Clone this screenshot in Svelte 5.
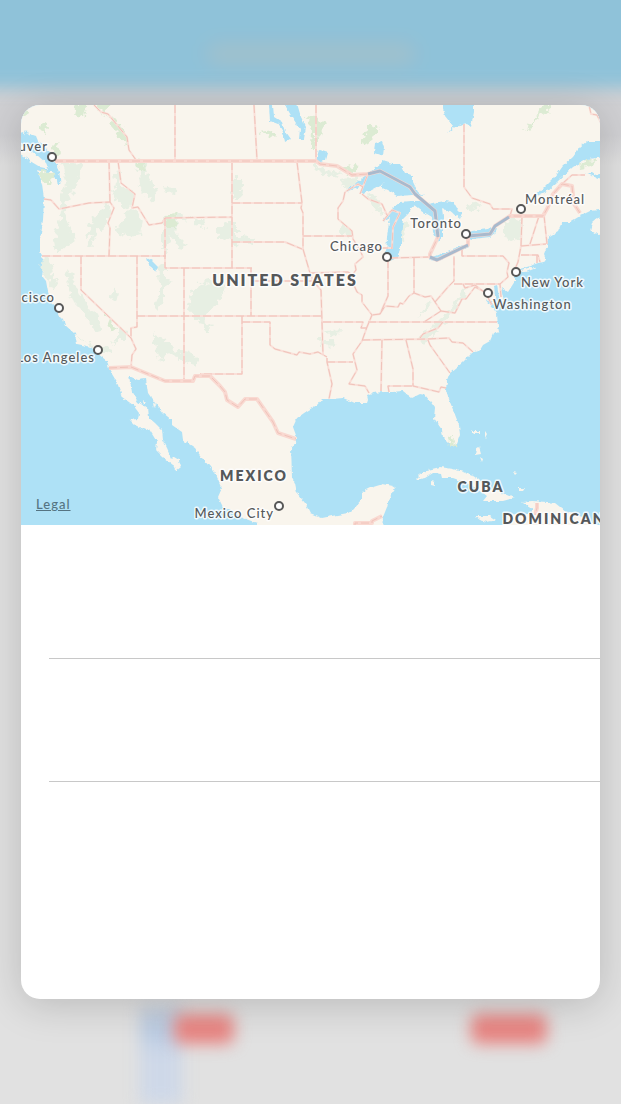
<script>
  const cities = [
    { name: 'Vancouver', x: 48, y: 151, anchor: 'end', cx: 52, cy: 157 },
    { name: 'San Francisco', x: 55, y: 302, anchor: 'end', cx: 59, cy: 308 },
    { name: 'Los Angeles', x: 95, y: 362, anchor: 'end', cx: 98, cy: 350 },
    { name: 'Chicago', x: 383, y: 251, anchor: 'end', cx: 387, cy: 257 },
    { name: 'Toronto', x: 462, y: 228, anchor: 'end', cx: 466, cy: 234 },
    { name: 'Montréal', x: 525, y: 204, anchor: 'start', cx: 521, cy: 209 },
    { name: 'New York', x: 521, y: 287, anchor: 'start', cx: 516, cy: 272 },
    { name: 'Washington', x: 493, y: 309, anchor: 'start', cx: 488, cy: 293 },
    { name: 'Mexico City', x: 274, y: 518, anchor: 'end', cx: 279, cy: 506 },
  ];

  const countries = [
    { name: 'UNITED STATES', x: 285, y: 286, large: true },
    { name: 'MEXICO', x: 254, y: 481 },
    { name: 'CUBA', x: 481, y: 492 },
    { name: 'DOMINICAN', x: 554, y: 524 },
  ];

  const mainland =
    'M15 100V128L26 137 30 134 36 136 38 141 44 145 50 154 54 162 57 166 58 174 56 180 53 172 47 172 37 169 39 174 42 184 44 198 43 221 40 239 40 250 44 264 42 276 46 281 48 292 53 304 59 308 58 314 63 319 65 325 75 334 77 344 92 347 98 354 107 361 109 369 115 379 118 385 122 397 133 405 139 413 138 419 130 420 135 425 145 430 149 429 157 442 156 450 163 457 173 465 176 471 181 467 179 460 174 457 172 459 167 448 163 440 162 430 155 423 148 417 147 408 138 402 132 392 129 376 138 380 146 379 148 393 155 403 163 413 172 420 172 425 182 432 183 440 195 448 202 458 210 467 217 477 222 488 218 497 223 507 233 512 243 518 257 523V530H382L383 517 387 507 389 498 396 488 393 486 383 484 370 488 362 492 362 500 353 510 348 513 337 515 322 518 310 513 305 503 297 493 295 483 292 477 291 447 296 443 297 438 293 427 297 418 307 411 317 405 322 399 332 399 343 398 355 403 367 403 368 400 367 395 373 393 383 392 393 392 403 391 412 398 420 394 425 395 430 401 435 408 434 418 442 430 443 437 452 446 457 443 460 435 459 425 454 412 450 402 446 390 447 381 450 373 462 363 472 353 480 350 483 345 490 341 493 334 499 332 498 326 497 314 493 308 486 299 495 305 495 296 494 286 497 285 499 297 504 302 501 287 508 292 515 281 515 274 516 270 527 267 538 263 547 261 544 254 547 246 548 237 558 231 562 222 570 222 580 216 590 211 608 209V100Z';

  const lakes = [
    'M345 192L357 182 370 172 380 164 383 161 392 164 400 164 405 173 413 176 413 182 418 192 424 196 413 195 397 196 387 190 380 187 385 183 370 191 360 194 363 186Z',
    'M383 221L392 209 400 202 410 201 420 201 411 208 410 212 403 219 401 237 401 247 397 257 390 260 386 254 387 237 390 217Z',
    'M410 202L420 201 427 204 445 201 453 202 457 209 462 214 460 219 450 211 442 209 443 217 443 237 438 241 433 232 432 217 422 211Z',
    'M428 257L435 256 445 252 463 245 469 245 467 248 456 252 446 257 437 261 431 260Z',
    'M463 236L472 231 488 229 497 227 496 232 490 237 472 239Z',
    'M269 105H273L274 117 282 122 285 132 290 139 285 142 283 132 278 124 270 121Z',
    'M282 100H296L301 117 306 127 304 139 299 139 300 129 292 117Z',
    'M316 160L319 150 328 153 326 160 318 163Z',
    'M375 143L382 141 384 147 383 156 374 153Z',
    'M441 100H474L474 112 471 127 467 124 455 127 448 133 453 126 445 116Z',
    'M147 258L152 261 158 267 156 271 150 268Z',
    'M608 141H587L580 147 573 157 563 166 555 177 543 189 525 202 547 191 557 182 573 167 587 159 608 157Z',
    'M585 173L592 173 595 175 608 172V179L597 178Z',
  ];

  const islands = [
    'M15 144L26 148 37 155 46 163 49 169 40 167 30 161 15 150Z',
    'M517 271L532 267 536 268 526 272Z',
    'M608 216L598 218 592 223 590 230 598 235 608 234Z',
    'M415 480L420 475 428 470 440 467 453 469 463 472 477 478 488 487 500 492 514 498 503 501 483 501 487 496 478 489 467 483 453 478 442 478 441 474 433 473 425 478Z',
    'M431 481L435 482 435 486 431 485Z',
    'M475 516L490 516 496 520 487 522 480 520Z',
    'M522 502L532 501 547 502 555 503 560 507 567 512 577 515 590 520 598 528 505 528 502 516 516 514 533 514 533 509 528 506Z',
    'M476 449L479 447 481 454 475 455Z',
    'M480 457L483 459 482 462Z',
    'M519 488L525 488 523 491 519 491Z',
    'M471 431L480 431 480 433 473 433Z',
    'M485 431L487 434 485 438Z',
    'M513 472L517 473 515 475Z',
    'M472 474L480 480 479 482 474 477Z',
    'M142 400L146 404 144 404Z',
    'M153 403L156 404 154 408Z',
  ];

  const forests = [
    'M60 161L83 163 82 172 77 180 73 190 68 202 64 212 70 225 75 240 64 248 56 254 54 240 58 224 62 209 59 196 66 183Z',
    'M94 218L106 203 112 208 107 224 96 232 91 250 86 246 93 236 86 237 90 225Z',
    'M114 173L121 171 120 184 135 193 132 205 125 209 117 202 110 190 118 188Z',
    'M133 161L145 163 149 178 155 187 157 200 148 198 141 187 140 173Z',
    'M124 212L133 208 143 220 140 235 128 237 118 233 116 226 125 220Z',
    'M165 187L175 188 176 193 168 194Z',
    'M162 216L178 215 190 218 203 219 205 228 198 226 192 219 178 220 176 235 187 246 181 249 170 236 166 255 162 251Z',
    'M43 257L51 262 53 276 57 287 51 288 47 277 41 268Z',
    'M66 268L72 274 77 288 84 298 89 311 98 315 102 330 95 331 84 313 74 303 68 287Z',
    'M165 263L165 281 174 280 164 286 164 300 157 310 153 306 160 296 160 283 158 266Z',
    'M114 288L118 294 116 303 111 300Z',
    'M200 283L212 281 224 288 218 305 209 310 204 322 211 326 206 332 197 320 187 309 190 298Z',
    'M152 333L165 338 175 350 190 352 199 361 195 365 181 361 168 351 161 362 155 348Z',
    'M118 328L129 329 125 338 119 343 111 344 118 337Z',
    'M75 333L84 343 113 350 111 354 92 348Z',
    'M233 178L243 178 240 199 232 199Z',
    'M216 230L227 222 237 222 237 236 256 239 249 244 234 243 230 240 218 239Z',
    'M325 331L339 329 338 335 330 336Z',
    'M319 339L335 339 334 346 320 345Z',
    'M417 339L428 331 441 318 452 307 460 292 467 286 465 297 452 313 438 329 425 343Z',
    'M432 299L427 309 418 319 426 305Z',
    'M504 223L513 217 522 221 521 237 510 242 504 234Z',
    'M466 203L480 201 478 211 471 212Z',
    'M341 180L360 176 355 186 343 187Z',
    'M314 163L325 169 340 173 338 177 322 173 313 168Z',
    'M373 194L379 202 382 214 375 210 367 196Z',
    'M343 223L352 231 351 236 341 234Z',
    'M400 219L408 224 402 239 398 233Z',
  ];

  const parks = [
    'M78 100H87L84 115 78 119 75 113Z',
    'M41 122L48 127 47 133 39 130Z',
    'M21 105H28L26 116 22 115Z',
    'M94 100H112L109 109 102 114 115 119 127 135 129 146 119 139 111 121 102 113Z',
    'M52 146L57 141 60 154 54 157Z',
    'M40 172L55 173 52 183 43 183Z',
    'M134 160L142 161 145 169 139 170Z',
    'M166 215L176 214V227H165Z',
    'M105 313L113 321 116 331 110 330Z',
    'M306 116L315 117 325 124 322 135 316 136 316 149 311 147 312 130Z',
    'M259 132L272 130 275 138 265 135Z',
    'M361 147L367 129 376 123 379 133 373 138 366 144Z',
    'M345 168L356 164 357 172 348 174Z',
    'M522 132L534 123 537 113 543 105 553 105 548 112 539 115 535 125Z',
    'M579 164L590 159 596 160 591 166 580 168Z',
    'M446 436L451 435 455 441 454 447 448 442Z',
  ];

  const stateLines =
    'M94 105L101 112 108 114 127 137 129 150 136 160 M175 105V160 M254 105L257 160 M316 105V160 M109 161L110 202 M44 199L51 200 59 209 89 203 110 202 114 208 108 223 110 228 109 256 M118 161L121 183 135 194 132 208 138 207 149 225 162 223 165 218 232 217 M165 218V268H252 M232 162V268 M232 203H302 M232 242H285L302 249 M297 162L302 203 301 208 303 213V249L310 273 313 281 321 290 323 355 M303 236H352 M345 192L343 201 338 208V219L352 231 353 239 360 250 363 257 355 264 356 270 353 274 353 283 357 292 362 295 362 302 372 315 367 327 362 341 353 354 357 370 349 384 365 386 369 393 M360 194L368 174 M363 187L358 184 345 192 M362 194L368 199 382 204 387 215 M383 221L392 210 400 213 393 227 392 249 M358 248H392 M388 260V296L380 314 372 315 M390 258L430 257 M380 314L385 306 398 307 400 303 403 304 409 296 414 293 425 297 431 296 435 302 441 311 M414 258V293 M435 302L448 287 454 281V256 M454 284H500 M462 250V256H503L509 263 507 272 508 277 500 284 501 297 M522 216L521 246 518 262 515 269 M539 216L530 244 M544 215L547 244 M521 246L546 244 M521 255H538L540 262 M537 255L537 263 M441 311L424 322 M368 322H497 M323 322H363L361 328H367 M362 340L428 339 449 338 452 342 463 343 473 352 M428 340L430 345 450 373 M420 338L423 334 438 328 443 322 M441 311L455 313 462 299H466L475 287 485 292 492 305 M463 284L465 288 475 285 484 292 M382 340L381 391 M406 340L413 369V386L439 392 441 387 446 388 M389 392L388 386H413 M327 362H353 M327 358V362L332 384 329 399 M242 316V374H200 M242 322H270V345L275 349 297 355 299 352 310 354 318 352 327 357 M137 316H322 M252 281H315 M251 268V316 M310 273L348 272 353 275 M137 256V327L131 328V338 M184 268V381 M42 256H166 M81 256V290L131 338 136 349 132 355 131 367 M464 124V187L472 198 490 204 493 209H512L510 216 M562 184L572 175H585 M589 105L591 114 597 115 601 123';

  const nationLines =
    'M55 161H316L320 164 337 166 352 175 368 174 380 171 410 187 415 194 435 211 438 237 430 254 430 257 437 260 468 245 468 236 490 234 495 226 510 216H543L548 207 553 194 562 184 572 186 574 204 580 213 M109 368L131 367 165 381H193L195 376H210L220 386 225 392 227 400 238 407 245 399H257L273 422 278 433 296 439 M355 528V523H372V521L382 516 M537 503V508L535 515';

  const boundaryWaters =
    'M368 174L380 171 410 187 415 194 435 211 438 237 M430 257L437 260 468 245 M468 236L490 234 495 226 509 217';
</script>

<div class="screen">
  <div class="backdrop" aria-hidden="true">
    <div class="bar"><span class="heading"></span></div>
    <div class="chips">
      <span class="link"></span>
      <span class="chip"></span>
      <span class="chip wide"></span>
    </div>
  </div>

  <main class="card">
    <div class="map">
      <svg viewBox="21 105 579 420" role="img" aria-label="Map of the United States">
        <defs>
          <filter id="coast" x="-5%" y="-5%" width="110%" height="110%">
            <feTurbulence type="fractalNoise" baseFrequency="0.22" numOctaves="2" seed="4" />
            <feDisplacementMap in="SourceGraphic" scale="4" xChannelSelector="R" yChannelSelector="G" />
          </filter>
          <filter id="woods" x="-5%" y="-5%" width="110%" height="110%">
            <feTurbulence type="fractalNoise" baseFrequency="0.18" numOctaves="2" seed="9" />
            <feDisplacementMap in="SourceGraphic" scale="11" xChannelSelector="R" yChannelSelector="G" />
          </filter>
        </defs>
        <rect class="water" x="21" y="105" width="579" height="420" />
        <g filter="url(#coast)">
          <path class="land" d={mainland} />
        </g>
        <g filter="url(#woods)">
          {#each forests as d}<path class="forest" {d} />{/each}
          {#each parks as d}<path class="park" {d} />{/each}
        </g>
        <g filter="url(#coast)">
          {#each lakes as d}<path class="water" {d} />{/each}
          {#each islands as d}<path class="land" {d} />{/each}
          <path class="inlet" d="M21 134L31 140 36 138M25 131L29 137M32 139L42 149 54 155M54 162L58 174 59 184M55 175L58 181" />
        </g>
        <g class="borders">
          <path class="state" d={stateLines} />
          <path class="state dash" d={stateLines} />
        </g>
        <path class="nation" d={nationLines} />
        <path class="nation dash" d={nationLines} />
        <path class="shared" d={boundaryWaters} />
        {#each cities as c}
          <circle cx={c.cx} cy={c.cy} r="4" />
          <text class="city" x={c.x} y={c.y} text-anchor={c.anchor}>{c.name}</text>
        {/each}
        {#each countries as c}
          <text class="country" class:large={c.large} x={c.x} y={c.y} text-anchor="middle">{c.name}</text>
        {/each}
      </svg>
      <a class="legal" href="#legal">Legal</a>
    </div>
    <div class="row first"></div>
    <div class="row"></div>
  </main>
</div>

<style>
  :global(body) {
    margin: 0;
    background: #e1e1e1;
  }
  .screen {
    position: relative;
    box-sizing: border-box;
    min-height: 100vh;
    padding: 105px 21px;
    display: flex;
    overflow: hidden;
    font-family: Lato, 'Open Sans', sans-serif;
  }
  .backdrop {
    position: absolute;
    inset: 0;
    display: flex;
    flex-direction: column;
    justify-content: space-between;
    background: linear-gradient(#d0d0d3 135px, #e1e1e1 165px);
  }
  .bar {
    height: 88px;
    margin: 0 -20px;
    display: flex;
    justify-content: center;
    background: #8fc2d9;
    box-shadow: 0 -20px 0 #8fc2d9;
    filter: blur(8px);
  }
  .heading {
    width: 208px;
    height: 20px;
    margin-top: 44px;
    border-radius: 8px;
    background: #a2c0cb;
    filter: blur(6px);
  }
  .chips {
    height: 98px;
    display: flex;
    padding-left: 140px;
  }
  .chips span {
    filter: blur(8px);
  }
  .link {
    width: 42px;
    height: 98px;
    background: linear-gradient(#c6cedb, #b9cbe2 24px, #ced8e8 50px);
  }
  .chip {
    width: 60px;
    height: 30px;
    margin: 8px 0 0 -8px;
    border-radius: 8px;
    background: #e88582;
  }
  .wide {
    width: 76px;
    margin-left: 237px;
  }
  .card {
    position: relative;
    flex: 1;
    min-width: 0;
    border-radius: 19px;
    overflow: hidden;
    background: #fff;
    box-shadow: 0 5px 40px rgba(0, 0, 0, 0.18);
  }
  .map {
    position: relative;
  }
  svg {
    display: block;
    width: 100%;
    height: auto;
  }
  .water {
    fill: #aee1f6;
  }
  .land {
    fill: #f9f5ed;
  }
  .forest {
    fill: #e7efe3;
  }
  .park {
    fill: #dcebd3;
  }
  .inlet {
    fill: none;
    stroke: #aee1f6;
    stroke-width: 3;
  }
  .state,
  .nation,
  .shared {
    fill: none;
    stroke: #fadfd8;
    stroke-width: 2;
    stroke-linejoin: round;
  }
  .borders {
    transform: translateY(0);
  }
  .nation {
    stroke: #f9d9d1;
    stroke-width: 4;
  }
  .state.dash,
  .nation.dash {
    stroke: #f0c3ba;
    stroke-width: 1;
    stroke-dasharray: 8 3;
  }
  .shared {
    stroke: #a9bacd;
    stroke-width: 3;
  }
  circle {
    fill: #fff;
    stroke: #575757;
    stroke-width: 2;
  }
  text {
    paint-order: stroke;
    stroke: rgba(255, 255, 255, 0.8);
    stroke-width: 3px;
    stroke-linejoin: round;
    fill: #55585a;
  }
  .city {
    font-size: 13px;
    font-weight: 500;
    letter-spacing: 1px;
  }
  .country {
    font-size: 14px;
    font-weight: 800;
    letter-spacing: 2px;
  }
  .country.large {
    font-size: 16px;
  }
  .legal {
    position: absolute;
    left: 15px;
    bottom: 13px;
    color: #557482;
    font-size: 13px;
    font-weight: 500;
    line-height: 16px;
    letter-spacing: 1px;
  }
  .row {
    box-sizing: border-box;
    height: 123px;
    margin-left: 28px;
    border-bottom: 1px solid #c8c8c8;
  }
  .first {
    height: 134px;
  }
</style>
